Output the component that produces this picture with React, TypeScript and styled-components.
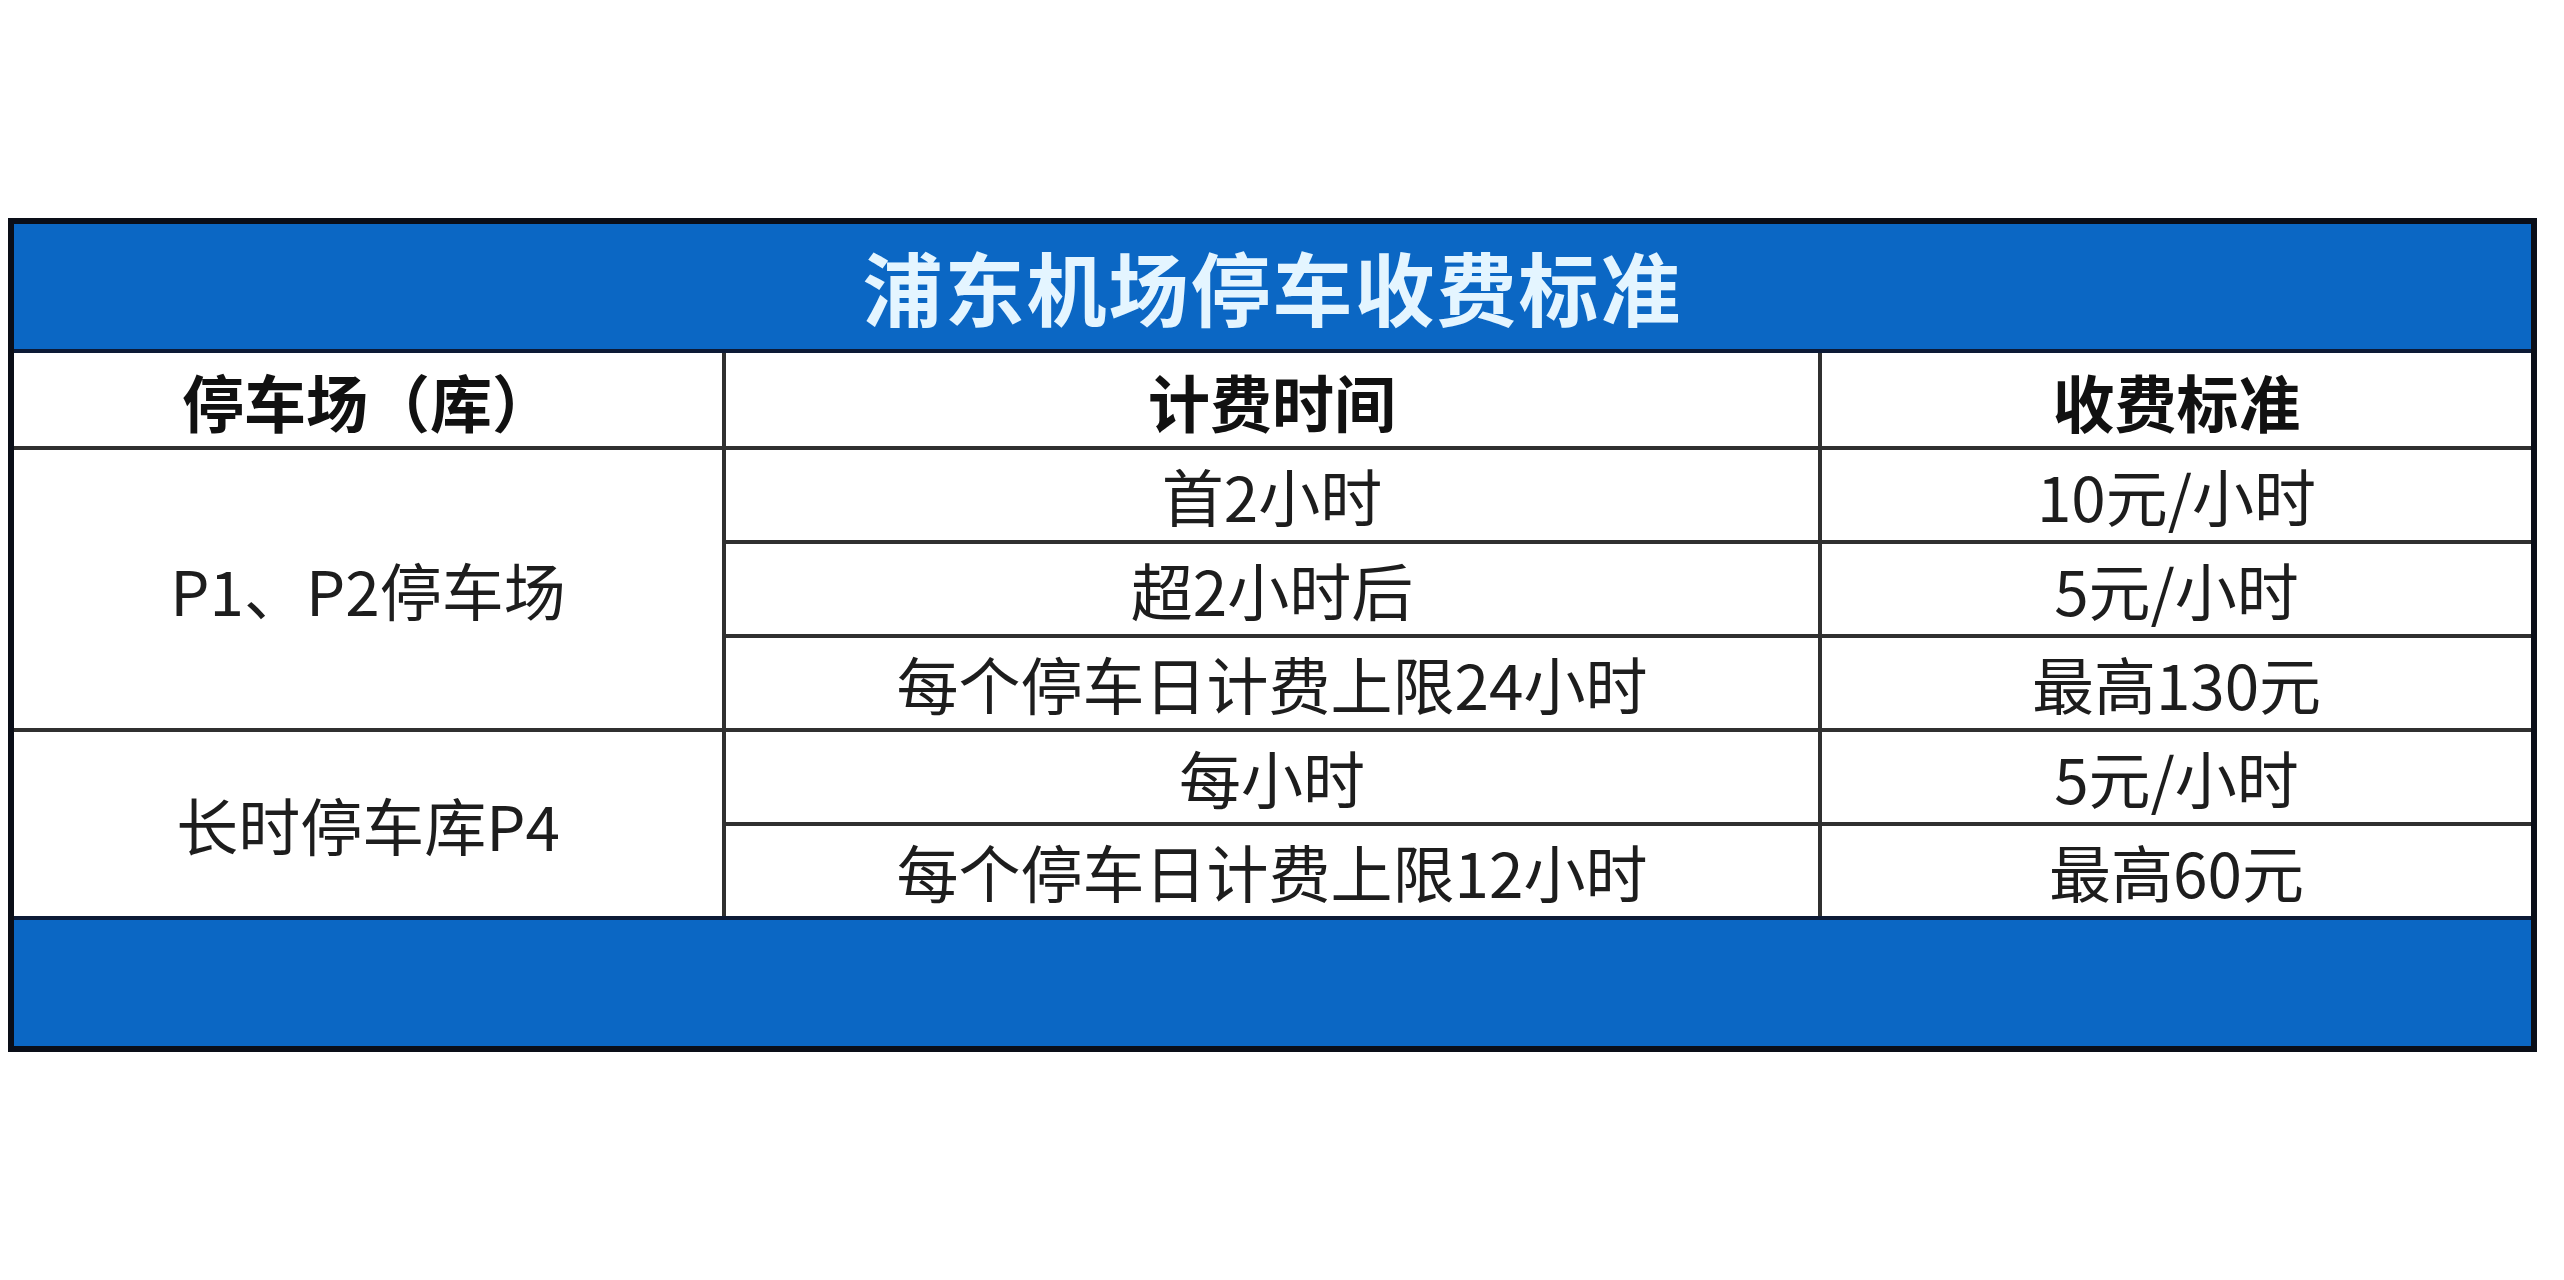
import React from 'react';
import styled, { createGlobalStyle } from 'styled-components';

const GlobalStyle = createGlobalStyle`
	html, body {
		margin: 0;
		padding: 0;
		background: #ffffff;
	}
	body {
		font-family: "Noto Sans CJK SC", "Noto Sans", sans-serif;
	}
`

interface FeeRow {
	time: string;
	price: string;
}

interface Lot {
	name: string;
	rows: FeeRow[];
}

const lots: Lot[] = [
	{
		name: 'P1、P2停车场',
		rows: [
			{ time: '首2小时', price: '10元/小时' },
			{ time: '超2小时后', price: '5元/小时' },
			{ time: '每个停车日计费上限24小时', price: '最高130元' },
		],
	},
	{
		name: '长时停车库P4',
		rows: [
			{ time: '每小时', price: '5元/小时' },
			{ time: '每个停车日计费上限12小时', price: '最高60元' },
		],
	},
];

export default function App() {
	let rowIndex = 3;

	return (
		<Page>
			<GlobalStyle />
			<Table>
				<TitleBar>浦东机场停车收费标准</TitleBar>
				<HeadCell>停车场（库）</HeadCell>
				<HeadCell>计费时间</HeadCell>
				<HeadCell>收费标准</HeadCell>
				{lots.map((lot) => {
					const start = rowIndex;
					rowIndex += lot.rows.length;
					return (
						<React.Fragment key={lot.name}>
							<LotCell start={start} span={lot.rows.length}>
								{lot.name}
							</LotCell>
							{lot.rows.map((row) => (
								<React.Fragment key={row.time}>
									<Cell>{row.time}</Cell>
									<Cell>{row.price}</Cell>
								</React.Fragment>
							))}
						</React.Fragment>
					);
				})}
				<FooterBar />
			</Table>
		</Page>
	);
}

const Page = styled.div`
	padding: 218px 27px 228px 8px;
`

const Table = styled.div`
	display: grid;
	grid-template-columns: 708px 1092px 1fr;
	grid-template-rows: 125px 93px repeat(5, 90px) 126px;
	gap: 4px;
	width: 2517px;
	background: #303030;
	border: 6px solid #0a0e18;
`

const Bar = styled.div`
	grid-column: 1 / -1;
	background: #0b67c4;
`

const TitleBar = styled(Bar)`
	display: flex;
	align-items: center;
	justify-content: center;
	box-shadow: 0 4px 0 #0c1a36;
	color: #e4f5ff;
	font-size: 80px;
	font-weight: 700;
	letter-spacing: 2px;
	padding-bottom: 4px;
	box-sizing: border-box;
`

const FooterBar = styled(Bar)`
	box-shadow: 0 -4px 0 #0c1a36;
`

const Cell = styled.div`
	display: flex;
	align-items: center;
	justify-content: center;
	background: #ffffff;
	color: #1d1d1d;
	font-size: 62px;
	font-weight: 400;
	white-space: nowrap;
	line-height: 1;
`

const HeadCell = styled(Cell)`
	font-weight: 700;
	color: #111111;
	padding-top: 2px;
`

const LotCell = styled(Cell)<{ start: number; span: number }>`
	grid-column: 1;
	grid-row: ${props => props.start} / span ${props => props.span};
`
